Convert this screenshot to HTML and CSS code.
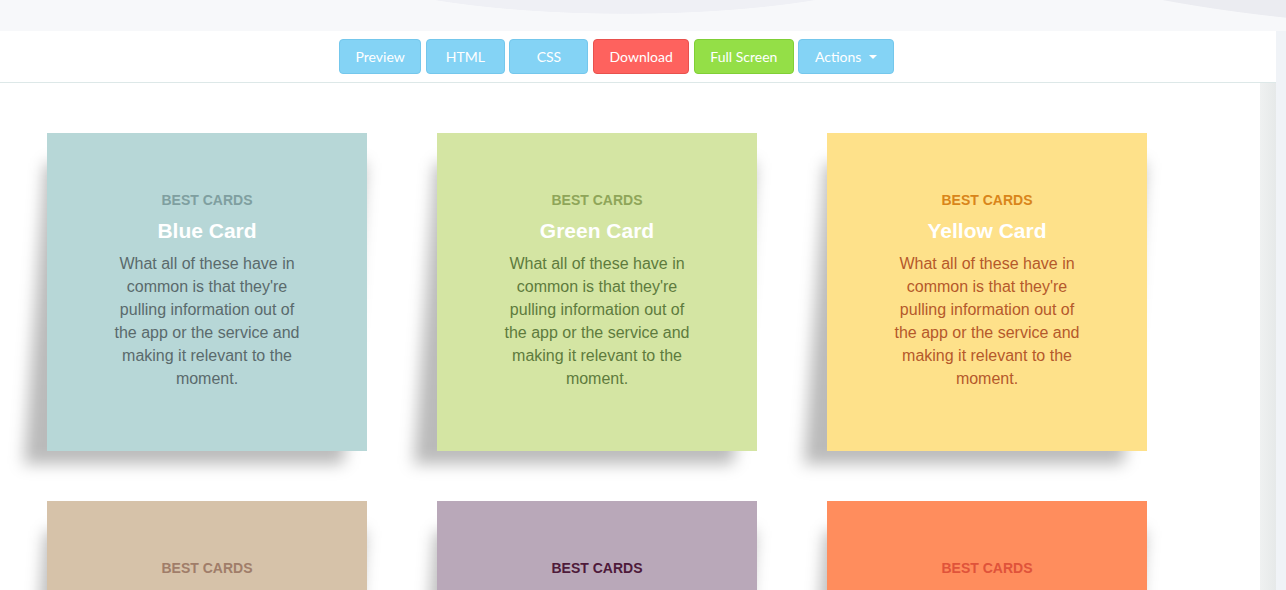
FILE: index.html
```html
<!DOCTYPE html>
<html lang="en">
<head>
<meta charset="utf-8">
<title>Best Cards</title>
<link rel="stylesheet" href="styles.css">
</head>
<body>
<div class="top-strip"></div>
<div class="frame">
  <div class="main">
    <div class="toolbar">
      <button class="btn btn-blue">Preview</button>
      <button class="btn btn-blue">HTML</button>
      <button class="btn btn-blue">CSS</button>
      <button class="btn btn-red">Download</button>
      <button class="btn btn-green">Full Screen</button>
      <button class="btn btn-blue">Actions <span class="caret"></span></button>
    </div>
    <div class="content">
      <div class="stage">
        <div class="grid">
          <div class="card card-blue">
            <div class="label">Best Cards</div>
            <h2 class="title">Blue Card</h2>
            <p class="text">What all of these have in common is that they're pulling information out of the app or the service and making it relevant to the moment.</p>
          </div>
          <div class="card card-green">
            <div class="label">Best Cards</div>
            <h2 class="title">Green Card</h2>
            <p class="text">What all of these have in common is that they're pulling information out of the app or the service and making it relevant to the moment.</p>
          </div>
          <div class="card card-yellow">
            <div class="label">Best Cards</div>
            <h2 class="title">Yellow Card</h2>
            <p class="text">What all of these have in common is that they're pulling information out of the app or the service and making it relevant to the moment.</p>
          </div>
          <div class="card card-brown">
            <div class="label">Best Cards</div>
            <h2 class="title">Brown Card</h2>
            <p class="text">What all of these have in common is that they're pulling information out of the app or the service and making it relevant to the moment.</p>
          </div>
          <div class="card card-purple">
            <div class="label">Best Cards</div>
            <h2 class="title">Purple Card</h2>
            <p class="text">What all of these have in common is that they're pulling information out of the app or the service and making it relevant to the moment.</p>
          </div>
          <div class="card card-orange">
            <div class="label">Best Cards</div>
            <h2 class="title">Orange Card</h2>
            <p class="text">What all of these have in common is that they're pulling information out of the app or the service and making it relevant to the moment.</p>
          </div>
        </div>
      </div>
      <div class="scroll-strip"></div>
    </div>
  </div>
  <div class="gutter"></div>
</div>
</body>
</html>
```

FILE: styles.css
```css
html, body {
  margin: 0;
  padding: 0;
  height: 100%;
  overflow: hidden;
}

body {
  background: #f7f8fa;
  font-family: "Liberation Sans", Arial, sans-serif;
}

.top-strip {
  height: 31px;
  background:
    radial-gradient(ellipse 300px 60px at 625px -46px, #eff0f5 99%, rgba(239,240,245,0) 100%),
    radial-gradient(ellipse 600px 150px at 1520px -120px, #ebecf1 99.5%, rgba(235,236,241,0) 100%),
    #f7f8fa;
}

.frame {
  display: flex;
  height: calc(100% - 31px);
}

.main {
  flex: 1;
  display: flex;
  flex-direction: column;
  background: #fff;
}

.gutter {
  width: 10px;
  background: #f0f3f7;
}

.toolbar {
  height: 43px;
  padding: 8px 0 0 339px;
  border-bottom: 1px solid #dde8e8;
  display: flex;
  gap: 4.6px;
  align-items: flex-start;
}

.btn {
  height: 35px;
  min-width: 79px;
  padding: 0 15.5px;
  border-radius: 4px;
  border: 1px solid;
  color: #fff;
  font-family: Lato, "Open Sans", sans-serif;
  font-size: 14px;
  line-height: 33px;
  display: inline-flex;
  align-items: center;
  justify-content: center;
  gap: 8px;
  cursor: pointer;
}

.btn-blue {
  background: #84d3f5;
  border-color: #74c7ec;
}

.btn-red {
  background: #fe625e;
  border-color: #e8514d;
}

.btn-green {
  background: #94df47;
  border-color: #80cf36;
}

.caret {
  width: 0;
  height: 0;
  border-left: 4px solid transparent;
  border-right: 4px solid transparent;
  border-top: 4px solid #fff;
  margin-top: 1px;
}

.content {
  flex: 1;
  display: flex;
  min-height: 0;
}

.stage {
  flex: 1;
  background: #fff;
  overflow: hidden;
}

.scroll-strip {
  width: 16px;
  background: linear-gradient(to right, #eff1f1, #e6e9e9);
}

.grid {
  isolation: isolate;
  display: grid;
  grid-template-columns: repeat(3, 320px);
  column-gap: 70px;
  row-gap: 50px;
  padding: 50px 0 0 47px;
}

.card {
  position: relative;
  height: 318px;
  box-sizing: border-box;
  padding: 57px 60px 0;
  text-align: center;
}

.card::before {
  content: "";
  position: absolute;
  z-index: -1;
  top: 30px;
  left: -2px;
  right: 2px;
  bottom: -13px;
  background: rgba(0, 0, 0, 0.27);
  filter: blur(8px);
  transform: skewX(-4deg);
  transform-origin: top left;
}

.label {
  font-size: 14px;
  line-height: 20px;
  font-weight: bold;
  text-transform: uppercase;
}

.title {
  margin: 9px 0 0;
  font-size: 21px;
  line-height: 24px;
  font-weight: bold;
  color: #fff;
}

.text {
  margin: 9px 0 0;
  font-size: 16px;
  line-height: 23px;
}

.card-blue { background: #b7d7d7; }
.card-blue .label { color: #7f9fa0; }
.card-blue .text { color: #5a6a6c; }

.card-green { background: #d4e5a3; }
.card-green .label { color: #8fa559; }
.card-green .text { color: #5e7b3d; }

.card-yellow { background: #fee18a; }
.card-yellow .label { color: #d9851a; }
.card-yellow .text { color: #b5592b; }

.card-brown { background: #d6c2a9; }
.card-brown .label { color: #a07d69; }
.card-brown .text { color: #7d6150; }

.card-purple { background: #b9a8b9; }
.card-purple .label { color: #4e1a3a; }
.card-purple .text { color: #5b3550; }

.card-orange { background: #ff8d5d; }
.card-orange .label { color: #e0533a; }
.card-orange .text { color: #b9452d; }
```
